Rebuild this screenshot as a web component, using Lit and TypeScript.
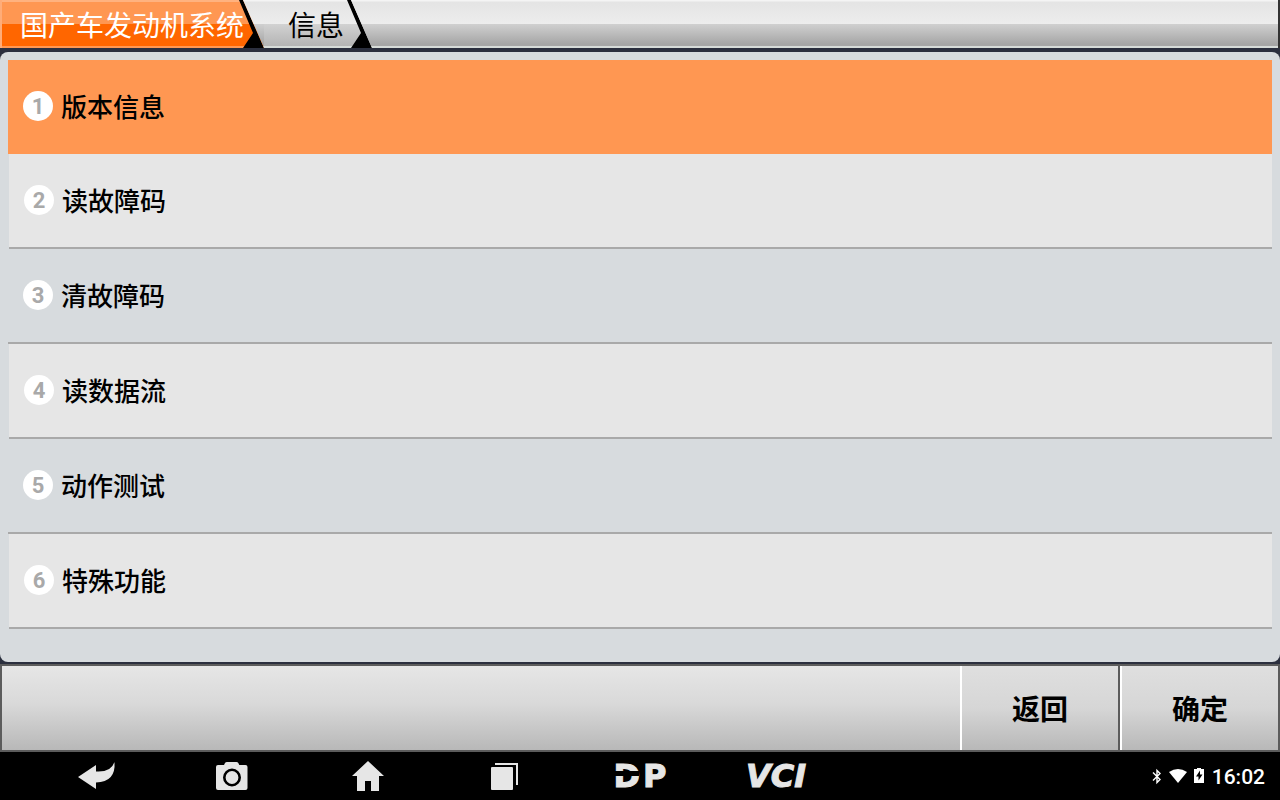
import { LitElement, html, css, svg } from "lit";
import { customElement, property, state } from "lit/decorators.js";

const icons = {
  back: svg`<path d="M0 21 18 9v6.500q15 1 18.500-9.500 1.500 20-18.500 20.500V33Z"/>`,
  camera: svg`<path fill-rule="evenodd" d="M4 9h6l1-2q.6-1 2-1h9.500q1.200 0 1.800 1l1 2h6.200q2 0 2 2v21q0 2-2 2H4q-2 0-2-2V11q0-2 2-2Z"/><circle cx="18" cy="21.500" r="7.700" fill="none" stroke="#000" stroke-width="2.600"/>`,
  home: svg`<path d="M18 5 34 20h-5v15h-8V25h-6v10H7V20H2Z"/>`,
  recents: svg`<rect x="5" y="11" width="22" height="23" rx="1"/><path d="M9 7h23v22h-2V9H9Z"/>`,
};

@customElement("nav-bar")
export class NavBar extends LitElement {
  static styles = css`
    :host { display: flex; align-items: center; justify-content: space-between; height: 48px; padding: 0 15px 0 28px; box-sizing: border-box; background: #000; color: #fff; }
    .keys { display: flex; height: 100%; }
    .key { display: flex; align-items: center; justify-content: center; width: 136px; height: 100%; border: 0; padding: 0; background: none; color: #e6e6e6; font: 700 32px/48px "DejaVu Sans", sans-serif; cursor: pointer; }
    .glyph { width: 36px; height: 40px; overflow: visible; fill: #e6e6e6; }
    .logo { position: relative; display: flex; gap: 3px; -webkit-text-stroke: 1px #e6e6e6; }
    .slit { position: absolute; left: 0; top: 19px; width: 26px; height: 5px; background: #000; }
    .vci { font-style: italic; -webkit-text-stroke: 1px #e6e6e6; }
    .status { display: flex; align-items: center; font: 500 21px/24px Roboto, sans-serif; padding-top: 1px; }
    .status svg { fill: #fff; height: 18px; margin-bottom: 2px; }
    .bt { width: 10px; margin-right: 7px; }
    .wifi { width: 18px; margin-right: 6px; }
    .battery { width: 12px; margin-right: 7px; }
  `;
  render() {
    const key = (label: string, icon: unknown) => html`<button class="key" aria-label=${label}><svg class="glyph" viewBox="0 0 36 40">${icon}</svg></button>`;
    return html`
      <div class="keys">
        ${key("返回上一页", icons.back)}${key("截屏", icons.camera)}${key("主页", icons.home)}${key("最近任务", icons.recents)}
        <button class="key"><span class="logo"><span>D</span><span>P</span><span class="slit"></span></span></button>
        <button class="key"><span class="vci">VCI</span></button>
      </div>
      <div class="status">
        <svg class="bt" viewBox="0 0 10 18"><path d="M1 5.500 8 12.500 5 15.500V3.500L8 6.500 1 13.500" fill="none" stroke="#fff" stroke-width="1.400"/></svg>
        <svg class="wifi" viewBox="0 0 18 18"><path d="M0 5q9-6 18 0L9 16Z"/></svg>
        <svg class="battery" viewBox="0 0 12 18"><path d="M1 2h3V1h4v1h3v14H1Z"/><path d="M7 3.500 3 9.500h2.500v4L9.500 7.500H7Z" fill="#000"/></svg>
        <time>16:02</time>
      </div>`;
  }
}

@customElement("crumb-tab")
export class CrumbTab extends LitElement {
  @property({ type: Boolean, reflect: true }) active = false;
  static styles = css`
    :host { display: block; height: 48px; }
    .tab { position: relative; display: block; height: 48px; border: 0; margin: 0; padding: 0 28px 0 24px; font: 400 28px/48px "Noto Sans CJK SC", sans-serif; color: #000; cursor: pointer;
      clip-path: polygon(0 0, calc(100% - 21px) 0, 100% 100%, 0 100%);
      background: linear-gradient(#f4f4f4 0 1px, #e4e4e4 2px, #ededed 24px, #d2d2d2 24px, #b4b4b4 46px, #d6dbd8 46px); }
    :host([active]) .tab { padding: 0 20px; color: #fff; background: linear-gradient(#ffb27f 0 2px, #ff9752 2px 24px, #ff6600 24px 46px, #ff9752 46px); box-shadow: inset 2px 0 #ffac78; }
    .edge { position: absolute; right: 0; top: 0; width: 25px; height: 48px; }
    .text { position: relative; }
  `;
  render() {
    return html`<button class="tab">
      <svg class="edge" viewBox="0 0 25 48"><path d="M0 0h4l21 48H4L14 33Z" fill="#000"/></svg>
      <span class="text"><slot></slot></span>
    </button>`;
  }
}

@customElement("app-root")
export class AppRoot extends LitElement {
  @state() private selected = 0;
  private items = ["版本信息", "读故障码", "清故障码", "读数据流", "动作测试", "特殊功能"];

  static styles = css`
    :host { display: flex; flex-direction: column; min-height: 100vh; box-sizing: border-box; background: #2b2f3e; font-family: "Noto Sans CJK SC", sans-serif; color: #000; }
    .header { display: flex; height: 48px; border-right: 2px solid #333; background: linear-gradient(#f4f4f4 0 1px, #e4e4e4 2px, #ededed 24px, #d0d0d0 24px, #a6a6a6 44px, #a6a6a6 46px, #d6dbd8 46px); }
    .panel { flex: 1; margin: 4px 0 2px; padding: 8px; border-radius: 8px; background: #d7dbde; }
    .list { list-style: none; margin: 0; padding: 0; }
    .row { display: flex; align-items: center; gap: 8px; width: 100%; height: 95px; box-sizing: border-box; border: 0; border-bottom: 2px solid #a9a9a9; padding: 0 15px 2px; background: none; text-align: left; font: 500 26px/40px "Noto Sans CJK SC", sans-serif; color: #000; cursor: pointer; }
    .item:nth-child(even) { padding-left: 1px; }
    .item:nth-child(even) .row { background: #e6e6e6; }
    .item .row.selected { height: 94px; border-bottom-width: 0; background: #ff9752; }
    .badge { display: grid; place-items: center; width: 30px; height: 30px; border-radius: 50%; background: #fff; color: #a9a9a9; font: 700 22px/28px Roboto, sans-serif; padding-top: 2px; box-sizing: border-box; }
    .toolbar { display: flex; justify-content: flex-end; height: 88px; box-sizing: border-box; border: 2px solid #5c5c5c; border-right: 0; background: linear-gradient(#e6e6e6, #d9d9d9 45%, #b8b8b8); }
    .action { width: 160px; border: 0; border-left: 2px solid #fff; border-right: 2px solid #5c5c5c; padding: 0; background: linear-gradient(#dfdfdf, #d6d6d6 50%, #b8b8b8); font: 700 28px/40px "Noto Sans CJK SC", sans-serif; color: #000; cursor: pointer; }
  `;

  render() {
    return html`
      <header class="header"><crumb-tab active>国产车发动机系统</crumb-tab><crumb-tab>信息</crumb-tab></header>
      <main class="panel">
        <ul class="list">
          ${this.items.map((name, i) => html`<li class="item">
            <button class="row ${i === this.selected ? "selected" : ""}" @click=${() => (this.selected = i)}>
              <span class="badge">${i + 1}</span><span>${name}</span>
            </button></li>`)}
        </ul>
      </main>
      <footer class="toolbar"><button class="action">返回</button><button class="action">确定</button></footer>
      <nav-bar></nav-bar>`;
  }
}
